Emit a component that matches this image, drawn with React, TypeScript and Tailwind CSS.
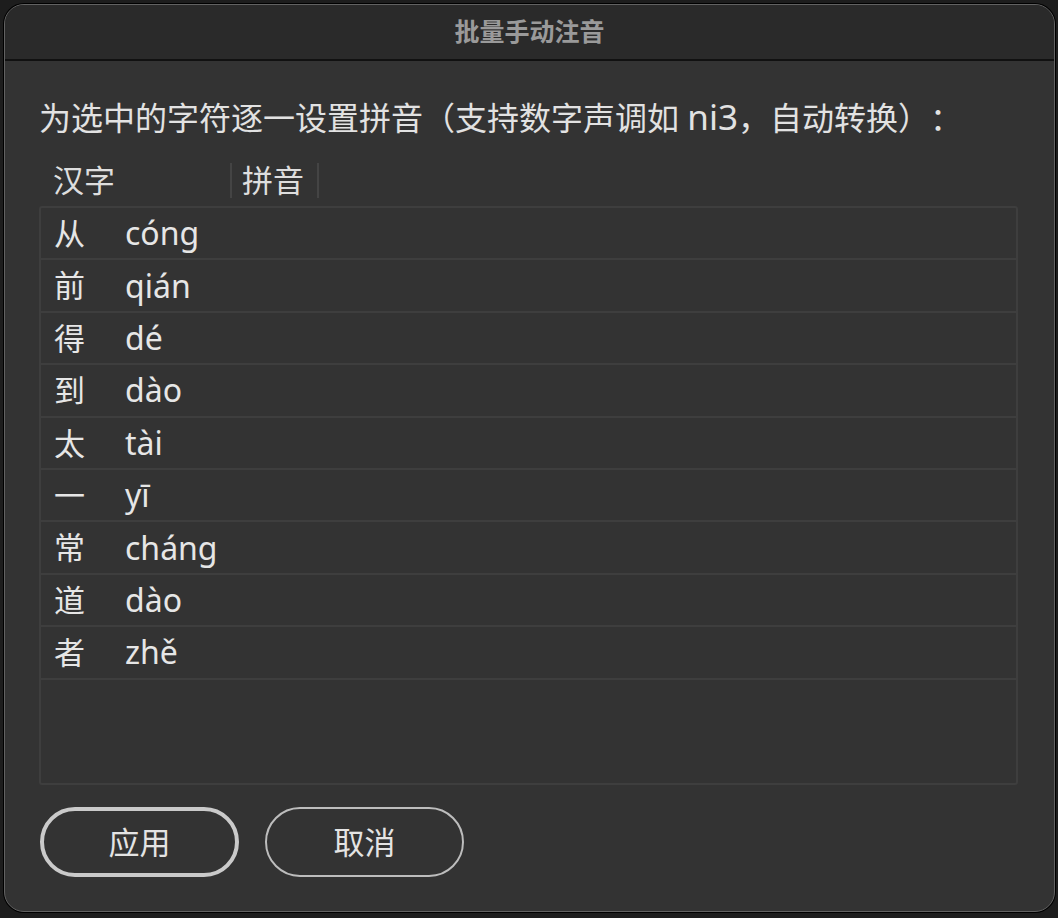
const rows = [
  { han: "从", py: "cóng" },
  { han: "前", py: "qián" },
  { han: "得", py: "dé" },
  { han: "到", py: "dào" },
  { han: "太", py: "tài" },
  { han: "一", py: "yī" },
  { han: "常", py: "cháng" },
  { han: "道", py: "dào" },
  { han: "者", py: "zhě" },
];

const font = { fontFamily: '"Noto Sans", "Noto Sans CJK SC", sans-serif' };

export default function App() {
  return (
    <div
      className="h-[918px] w-[1058px] overflow-hidden bg-[#1d1d1d] pl-[4px] pt-[4px] [text-spacing-trim:space-all]"
      style={font}
    >
      {/* dialog window */}
      <div className="flex h-[908px] w-[1051px] flex-col overflow-hidden rounded-[20px] border border-[#626262] bg-[#333333] shadow-[0_0_0_1px_#000]">
        <div className="flex h-[56px] shrink-0 items-center justify-center border-b-2 border-[#111111] bg-[#2a2a2a] text-[25px] font-bold text-[#9a9a9a]">
          批量手动注音
        </div>

        <div className="flex flex-col pl-[34px]">
          <p className="mt-[36px] text-[32px] leading-[40px] text-[#e2e2e2]">
            为选中的字符逐一设置拼音（支持数字声调如 <span className="text-[35px]">ni3</span>，自动转换）：
          </p>

          {/* column header */}
          <div className="mt-[25px] flex h-[35px] w-[979px] items-center text-[31px] text-[#dedede]">
            <div className="flex h-full w-[191px] items-center pl-[14px]">汉字</div>
            <div className="h-full w-[2px] bg-[#444444]" />
            <div className="flex h-full w-[85px] items-center pl-[10px]">拼音</div>
            <div className="h-full w-[2px] bg-[#444444]" />
          </div>

          {/* table */}
          <div className="mt-[8px] h-[579px] w-[979px] rounded-[3px] border-2 border-[#3e3e3e]">
            {rows.map((r, i) => (
              <div
                key={i}
                className="flex h-[52.4px] items-center border-b-2 border-[#3e3e3e] pl-[13px] text-[31px] text-[#e6e6e6]"
              >
                <span className="w-[71px]">{r.han}</span>
                <span className="text-[32px]">{r.py}</span>
              </div>
            ))}
          </div>

          {/* buttons */}
          <div className="mt-[22px] flex gap-[26px] pl-[1px]">
            <button
              type="button"
              className="flex h-[70px] w-[199px] items-center justify-center rounded-full border-4 border-[#cacaca] text-[31px] text-[#e4e4e4]"
            >
              应用
            </button>
            <button
              type="button"
              className="flex h-[70px] w-[199px] items-center justify-center rounded-full border-2 border-[#bdbdbd] text-[31px] text-[#e4e4e4]"
            >
              取消
            </button>
          </div>
        </div>
      </div>
    </div>
  );
}
